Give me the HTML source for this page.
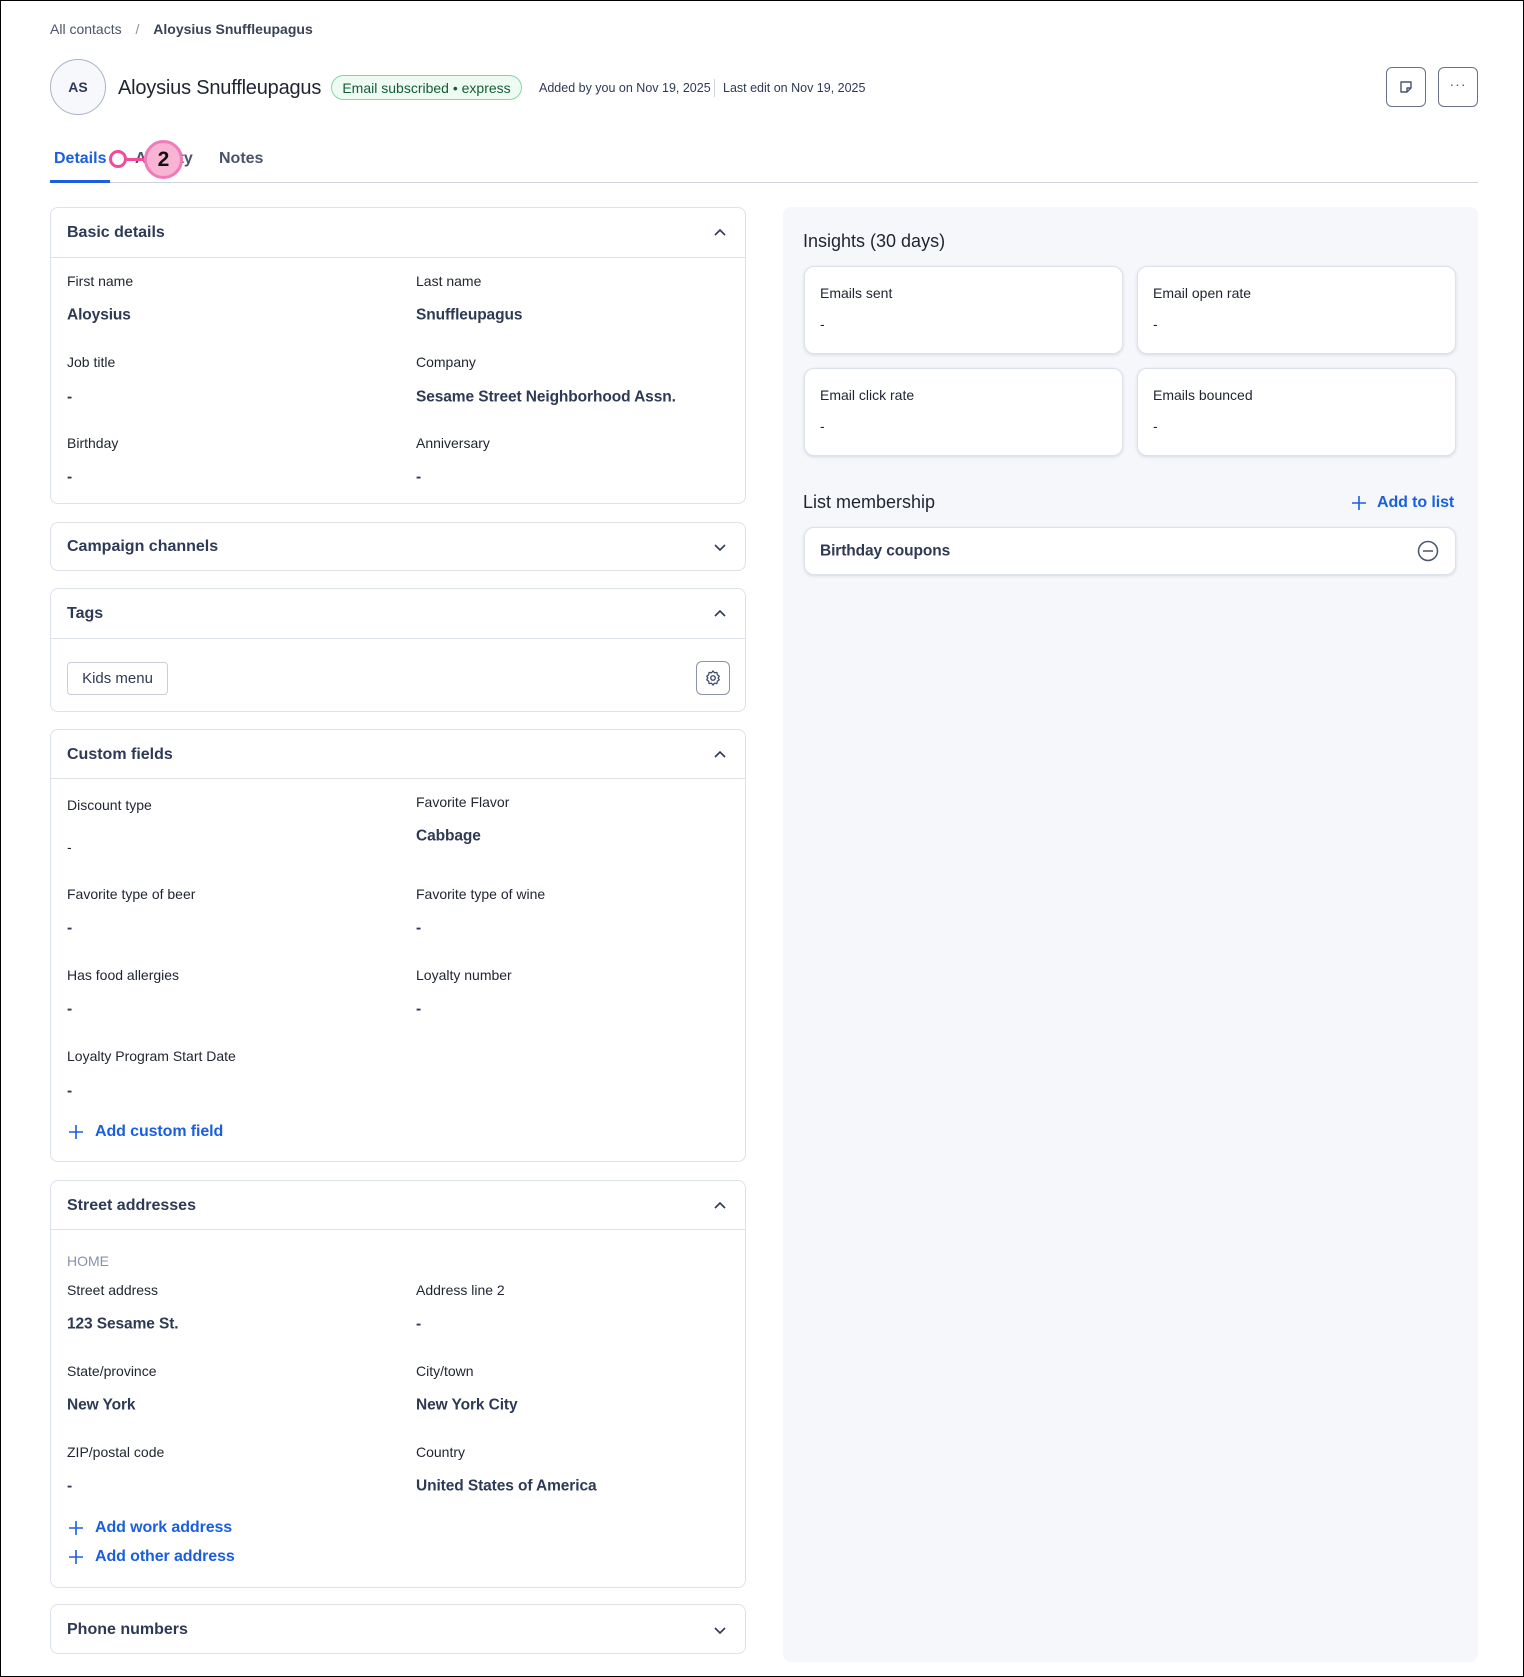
<!DOCTYPE html>
<html><head><meta charset="utf-8"><style>
*{box-sizing:border-box;margin:0;padding:0}
html,body{width:1524px;height:1677px;overflow:hidden;background:#fff}
body{position:relative;font-family:"Liberation Sans",sans-serif;color:#1f2430;border:1px solid #000}
.t{position:absolute;transform:translateY(-50%);white-space:nowrap;line-height:1}
.l{font-size:14px;color:#1f2430}
.v{font-size:15.5px;font-weight:bold;color:#2e3a55;letter-spacing:-0.1px}
.h{font-size:16px;font-weight:bold;color:#2e3a55}
.card{position:absolute;left:49px;width:696px;border:1px solid #dde1ea;border-radius:8px;background:#fff}
.hl{position:absolute;left:0;right:0;height:1px;background:#dde1ea}
.chev{position:absolute;right:18px;width:14px;height:14px}
.blue{color:#1a5fe0;font-weight:bold;font-size:16px;letter-spacing:-0.1px}
.ic{position:absolute;background:#fff;border:1px solid #dde1ea;border-radius:10px;box-shadow:0 1px 3px rgba(40,50,80,.15)}
</style></head><body>

<div class="t" style="left:49px;top:28px;font-size:14px;color:#4a5368">All contacts <span style="margin:0 10px;color:#8a93a6">/</span> <b style="color:#3a4255">Aloysius Snuffleupagus</b></div>

<div style="position:absolute;left:49px;top:58px;width:56px;height:56px;border-radius:50%;border:1px solid #aab2c5;background:#f7f8fb;font-size:14px;font-weight:bold;color:#2e3a55;display:flex;align-items:center;justify-content:center">AS</div>
<div class="t" style="left:117px;top:87px;font-size:20px;color:#1f2430;letter-spacing:-0.2px">Aloysius Snuffleupagus</div>
<div style="position:absolute;left:330px;top:74px;width:191px;height:25px;border:1px solid #7fd7a6;border-radius:13px;background:#eefbf3;color:#145c35;font-size:14px;display:flex;align-items:center;justify-content:center">Email subscribed • express</div>
<div class="t" style="left:538px;top:87px;font-size:12.5px;color:#2e3a55">Added by you on Nov 19, 2025</div>
<div style="position:absolute;left:713px;top:78px;width:1px;height:18px;background:#cfd4de"></div>
<div class="t" style="left:722px;top:87px;font-size:12.5px;color:#2e3a55">Last edit on Nov 19, 2025</div>

<div style="position:absolute;left:1385px;top:66px;width:40px;height:40px;border:1px solid #69718a;border-radius:6px">
<svg width="16" height="16" viewBox="0 0 16 16" style="position:absolute;left:11px;top:11px"><path d="M3 3h10v6l-4 4H3z M9 13v-4h4" fill="none" stroke="#4a5370" stroke-width="1.4" stroke-linejoin="round"/></svg></div>
<div style="position:absolute;left:1437px;top:66px;width:40px;height:40px;border:1px solid #69718a;border-radius:6px;text-align:center;line-height:32px;color:#4a5370;font-size:14px;letter-spacing:1px">···</div>

<div class="t" style="left:53px;top:158px;font-size:16px;font-weight:bold;color:#1a5fe0">Details</div>
<div class="t" style="left:134px;top:158px;font-size:16px;font-weight:bold;color:#4a5368">Activity</div>
<div class="t" style="left:218px;top:158px;font-size:16px;font-weight:bold;color:#4a5368">Notes</div>
<div style="position:absolute;left:49px;top:181px;width:1428px;height:1px;background:#cdd2dc"></div>
<div style="position:absolute;left:49px;top:179px;width:60px;height:3px;background:#1a5fe0"></div>
<div style="position:absolute;left:108px;top:149px;width:18px;height:18px;border-radius:50%;border:3px solid #f04c9a;background:#fff"></div>
<div style="position:absolute;left:126px;top:157px;width:20px;height:3px;background:#f04c9a"></div>
<div style="position:absolute;left:143px;top:139px;width:39px;height:39px;border-radius:50%;border:3px solid #f27ab8;background:#f8b4d5;font-size:21px;font-weight:bold;color:#111;display:flex;align-items:center;justify-content:center">2</div>

<!-- Basic details -->
<div class="card" style="top:206px;height:297px">
 <div class="t h" style="left:16px;top:25px">Basic details</div>
 <svg class="chev" style="top:18px" viewBox="0 0 14 14"><path d="M2 9l5-5 5 5" fill="none" stroke="#2e3a55" stroke-width="1.6"/></svg>
 <div class="hl" style="top:49px"></div>
 <div class="t l" style="left:16px;top:73px">First name</div><div class="t l" style="left:365px;top:73px">Last name</div>
 <div class="t v" style="left:16px;top:107px">Aloysius</div><div class="t v" style="left:365px;top:107px">Snuffleupagus</div>
 <div class="t l" style="left:16px;top:154px">Job title</div><div class="t l" style="left:365px;top:154px">Company</div>
 <div class="t v" style="left:16px;top:189px">-</div><div class="t v" style="left:365px;top:189px">Sesame Street Neighborhood Assn.</div>
 <div class="t l" style="left:16px;top:235px">Birthday</div><div class="t l" style="left:365px;top:235px">Anniversary</div>
 <div class="t v" style="left:16px;top:269px">-</div><div class="t v" style="left:365px;top:269px">-</div>
</div>

<div class="card" style="top:521px;height:49px">
 <div class="t h" style="left:16px;top:24px">Campaign channels</div>
 <svg class="chev" style="top:17px" viewBox="0 0 14 14"><path d="M2 5l5 5 5-5" fill="none" stroke="#2e3a55" stroke-width="1.6"/></svg>
</div>

<div class="card" style="top:587px;height:124px">
 <div class="t h" style="left:16px;top:25px">Tags</div>
 <svg class="chev" style="top:18px" viewBox="0 0 14 14"><path d="M2 9l5-5 5 5" fill="none" stroke="#2e3a55" stroke-width="1.6"/></svg>
 <div class="hl" style="top:49px"></div>
 <div style="position:absolute;left:16px;top:73px;width:101px;height:33px;border:1px solid #c9ceda;border-radius:4px;font-size:15px;color:#2e3a55;display:flex;align-items:center;justify-content:center">Kids menu</div>
 <div style="position:absolute;left:645px;top:72px;width:34px;height:34px;border:1px solid #8a93ab;border-radius:6px">
  <svg width="18" height="18" viewBox="0 0 24 24" style="position:absolute;left:7px;top:7px"><circle cx="12" cy="12" r="3" fill="none" stroke="#3a4563" stroke-width="1.8"/><path d="M12 2.5l2 2.6 3.2-.6.6 3.2 2.6 2-1.6 2.3 1.6 2.3-2.6 2-.6 3.2-3.2-.6-2 2.6-2-2.6-3.2.6-.6-3.2-2.6-2 1.6-2.3-1.6-2.3 2.6-2 .6-3.2 3.2.6z" fill="none" stroke="#3a4563" stroke-width="1.6" stroke-linejoin="round"/></svg>
 </div>
</div>

<div class="card" style="top:728px;height:433px">
 <div class="t h" style="left:16px;top:25px">Custom fields</div>
 <svg class="chev" style="top:18px" viewBox="0 0 14 14"><path d="M2 9l5-5 5 5" fill="none" stroke="#2e3a55" stroke-width="1.6"/></svg>
 <div class="hl" style="top:48px"></div>
 <div class="t l" style="left:16px;top:75px">Discount type</div><div class="t l" style="left:365px;top:72px">Favorite Flavor</div>
 <div class="t v" style="left:365px;top:106px">Cabbage</div>
 <div class="t l" style="left:16px;top:117px">-</div>
 <div class="t l" style="left:16px;top:164px">Favorite type of beer</div><div class="t l" style="left:365px;top:164px">Favorite type of wine</div>
 <div class="t v" style="left:16px;top:198px">-</div><div class="t v" style="left:365px;top:198px">-</div>
 <div class="t l" style="left:16px;top:245px">Has food allergies</div><div class="t l" style="left:365px;top:245px">Loyalty number</div>
 <div class="t v" style="left:16px;top:279px">-</div><div class="t v" style="left:365px;top:279px">-</div>
 <div class="t l" style="left:16px;top:326px">Loyalty Program Start Date</div>
 <div class="t v" style="left:16px;top:361px">-</div>
 <svg style="position:absolute;left:17px;top:394px" width="16" height="16" viewBox="0 0 16 16"><path d="M8 1v14M1 8h14" stroke="#1a5fe0" stroke-width="1.6"/></svg>
 <div class="t blue" style="left:44px;top:402px">Add custom field</div>
</div>

<div class="card" style="top:1179px;height:408px">
 <div class="t h" style="left:16px;top:25px">Street addresses</div>
 <svg class="chev" style="top:18px" viewBox="0 0 14 14"><path d="M2 9l5-5 5 5" fill="none" stroke="#2e3a55" stroke-width="1.6"/></svg>
 <div class="hl" style="top:48px"></div>
 <div class="t" style="left:16px;top:80px;font-size:14px;color:#8592ad">HOME</div>
 <div class="t l" style="left:16px;top:109px">Street address</div><div class="t l" style="left:365px;top:109px">Address line 2</div>
 <div class="t v" style="left:16px;top:143px">123 Sesame St.</div><div class="t v" style="left:365px;top:143px">-</div>
 <div class="t l" style="left:16px;top:190px">State/province</div><div class="t l" style="left:365px;top:190px">City/town</div>
 <div class="t v" style="left:16px;top:224px">New York</div><div class="t v" style="left:365px;top:224px">New York City</div>
 <div class="t l" style="left:16px;top:271px">ZIP/postal code</div><div class="t l" style="left:365px;top:271px">Country</div>
 <div class="t v" style="left:16px;top:305px">-</div><div class="t v" style="left:365px;top:305px">United States of America</div>
 <svg style="position:absolute;left:17px;top:339px" width="16" height="16" viewBox="0 0 16 16"><path d="M8 1v14M1 8h14" stroke="#1a5fe0" stroke-width="1.6"/></svg>
 <div class="t blue" style="left:44px;top:347px">Add work address</div>
 <svg style="position:absolute;left:17px;top:368px" width="16" height="16" viewBox="0 0 16 16"><path d="M8 1v14M1 8h14" stroke="#1a5fe0" stroke-width="1.6"/></svg>
 <div class="t blue" style="left:44px;top:376px">Add other address</div>
</div>

<div class="card" style="top:1603px;height:50px">
 <div class="t h" style="left:16px;top:25px">Phone numbers</div>
 <svg class="chev" style="top:18px" viewBox="0 0 14 14"><path d="M2 5l5 5 5-5" fill="none" stroke="#2e3a55" stroke-width="1.6"/></svg>
</div>

<!-- right panel -->
<div style="position:absolute;left:782px;top:206px;width:695px;height:1455px;background:#f6f7fb;border-radius:8px"></div>
<div class="t" style="left:802px;top:240px;font-size:18px;color:#1f2430;font-weight:500">Insights (30 days)</div>
<div class="ic" style="left:803px;top:265px;width:319px;height:88px"></div>
<div class="ic" style="left:1136px;top:265px;width:319px;height:88px"></div>
<div class="ic" style="left:803px;top:367px;width:319px;height:88px"></div>
<div class="ic" style="left:1136px;top:367px;width:319px;height:88px"></div>
<div class="t l" style="left:819px;top:292px">Emails sent</div><div class="t l" style="left:819px;top:323px">-</div>
<div class="t l" style="left:1152px;top:292px">Email open rate</div><div class="t l" style="left:1152px;top:323px">-</div>
<div class="t l" style="left:819px;top:394px">Email click rate</div><div class="t l" style="left:819px;top:425px">-</div>
<div class="t l" style="left:1152px;top:394px">Emails bounced</div><div class="t l" style="left:1152px;top:425px">-</div>
<div class="t" style="left:802px;top:501px;font-size:18px;color:#1f2430;font-weight:500">List membership</div>
<svg style="position:absolute;left:1350px;top:494px" width="16" height="16" viewBox="0 0 16 16"><path d="M8 1v14M1 8h14" stroke="#1a5fe0" stroke-width="1.6"/></svg>
<div class="t blue" style="left:1376px;top:502px">Add to list</div>
<div class="ic" style="left:803px;top:526px;width:652px;height:48px"></div>
<div class="t v" style="left:819px;top:550px">Birthday coupons</div>
<svg style="position:absolute;left:1416px;top:539px" width="22" height="22" viewBox="0 0 22 22"><circle cx="11" cy="11" r="9.5" fill="none" stroke="#4a5370" stroke-width="1.5"/><path d="M6 11h10" stroke="#4a5370" stroke-width="1.5"/></svg>
</body></html>
